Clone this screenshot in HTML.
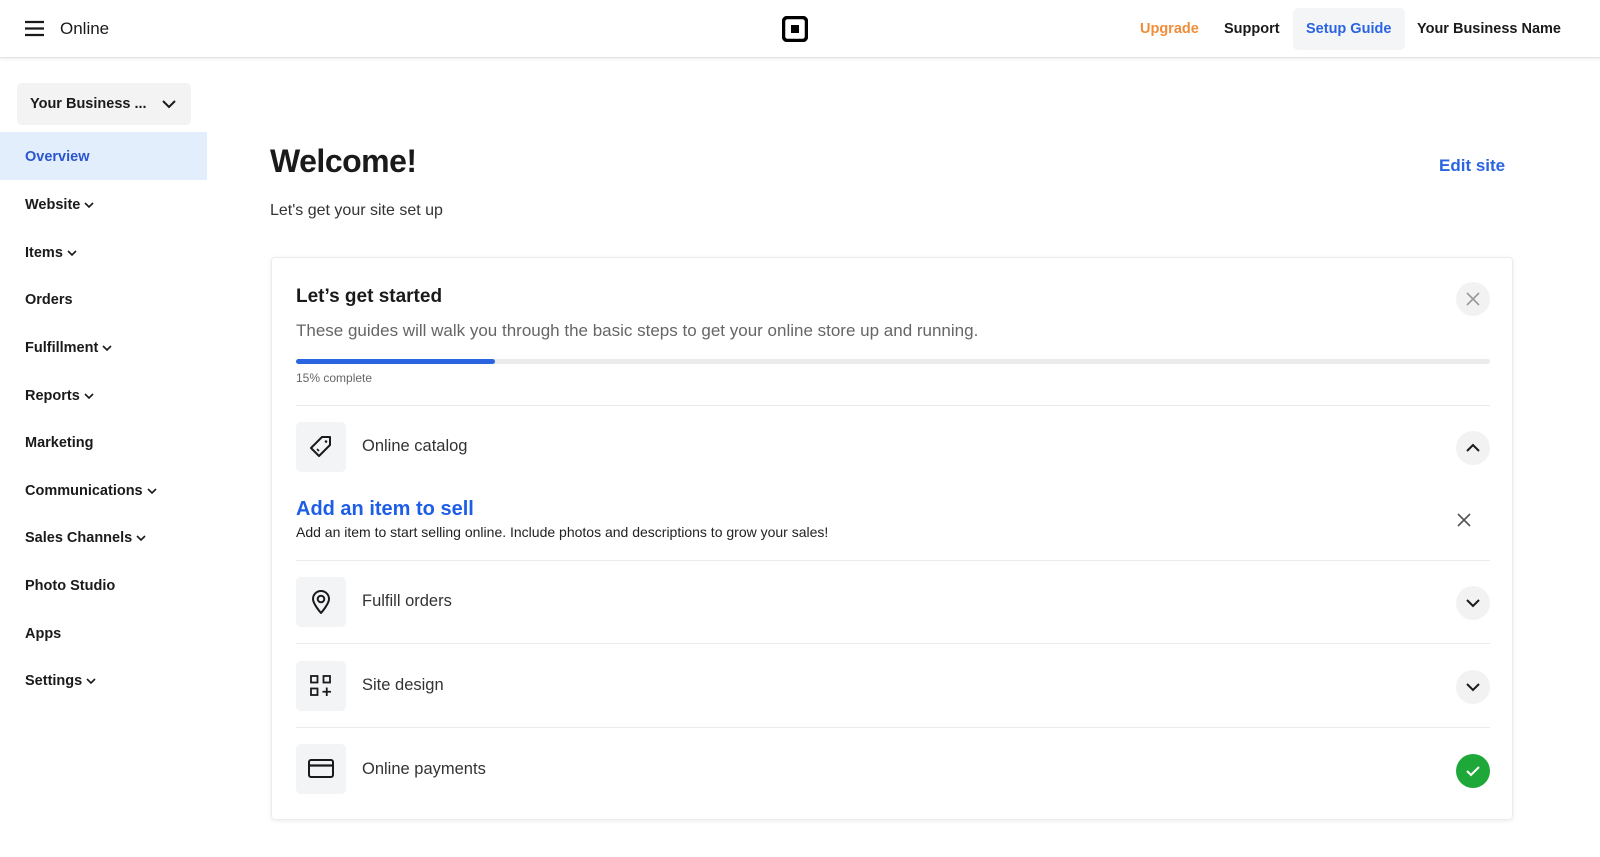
<!DOCTYPE html>
<html><head><meta charset="utf-8"><style>
*{box-sizing:border-box;margin:0;padding:0}
body{width:1600px;height:857px;overflow:hidden;background:#fff;font-family:"Liberation Sans",sans-serif;color:#1a1a1a;position:relative}
.top{position:absolute;left:0;top:0;width:1600px;height:58px;border-bottom:1px solid #e3e3e3;box-shadow:0 1px 3px rgba(0,0,0,.08)}
.abs{position:absolute}
.nav{position:absolute;left:25px;font-size:14.5px;font-weight:bold;color:#1a1a1a}
.nav svg{vertical-align:middle;margin-left:4px}
.card{position:absolute;left:271px;top:257px;width:1242px;height:563px;border:1px solid #ececec;border-radius:4px;box-shadow:0 1px 4px rgba(0,0,0,.08)}
.hr{position:absolute;left:24px;width:1194px;height:1px;background:#ebebeb}
.ib{position:absolute;left:24px;width:50px;height:50px;background:#f3f4f6;border-radius:5px;display:flex;align-items:center;justify-content:center}
.lbl{position:absolute;left:90px;font-size:16.5px;color:#333}
.cb{position:absolute;left:1184px;width:34px;height:34px;border-radius:50%;background:#f2f2f2;display:flex;align-items:center;justify-content:center}
</style></head><body>
<div class="top">
<svg class="abs" style="left:24px;top:20px" width="21" height="17"><path d="M1 2H20M1 8.5H20M1 15H20" stroke="#1a1a1a" stroke-width="2.2"/></svg>
<div class="abs" style="left:60px;top:19px;font-size:17px">Online</div>
<svg class="abs" style="left:782px;top:16px" width="26" height="26"><rect x="1.5" y="1.5" width="23" height="23" rx="4" fill="none" stroke="#000" stroke-width="3.5"/><rect x="9" y="9" width="8" height="8" fill="#000"/></svg>
<div class="abs" style="left:1140px;top:21px;font-size:14.5px;font-weight:bold;color:#f08d3b">Upgrade</div>
<div class="abs" style="left:1224px;top:21px;font-size:14.5px;font-weight:bold">Support</div>
<div class="abs" style="left:1293px;top:8px;width:112px;height:42px;background:#f3f5f7;border-radius:5px"></div>
<div class="abs" style="left:1306px;top:21px;font-size:14.5px;font-weight:bold;color:#2a64e0">Setup Guide</div>
<div class="abs" style="left:1417px;top:21px;font-size:14.5px;font-weight:bold">Your Business Name</div>
</div>
<div class="abs" style="left:17px;top:83px;width:174px;height:42px;background:#f3f3f3;border-radius:5px"></div>
<div class="abs" style="left:30px;top:96px;font-size:14.5px;font-weight:bold">Your Business ...</div>
<svg class="abs" style="left:161px;top:98px" width="16" height="12"><path d="M2 3L8 9L14 3" fill="none" stroke="#1a1a1a" stroke-width="2"/></svg>
<div class="abs" style="left:0;top:132px;width:207px;height:48px;background:#e3eefc"></div>
<div class="nav" style="top:149px;color:#2a55cf">Overview</div>
<div class="nav" style="top:197px">Website<svg width="10" height="8"><path d="M1 2L5 6L9 2" fill="none" stroke="#1a1a1a" stroke-width="1.6"/></svg></div>
<div class="nav" style="top:245px">Items<svg width="10" height="8"><path d="M1 2L5 6L9 2" fill="none" stroke="#1a1a1a" stroke-width="1.6"/></svg></div>
<div class="nav" style="top:292px">Orders</div>
<div class="nav" style="top:340px">Fulfillment<svg width="10" height="8"><path d="M1 2L5 6L9 2" fill="none" stroke="#1a1a1a" stroke-width="1.6"/></svg></div>
<div class="nav" style="top:388px">Reports<svg width="10" height="8"><path d="M1 2L5 6L9 2" fill="none" stroke="#1a1a1a" stroke-width="1.6"/></svg></div>
<div class="nav" style="top:435px">Marketing</div>
<div class="nav" style="top:483px">Communications<svg width="10" height="8"><path d="M1 2L5 6L9 2" fill="none" stroke="#1a1a1a" stroke-width="1.6"/></svg></div>
<div class="nav" style="top:530px">Sales Channels<svg width="10" height="8"><path d="M1 2L5 6L9 2" fill="none" stroke="#1a1a1a" stroke-width="1.6"/></svg></div>
<div class="nav" style="top:578px">Photo Studio</div>
<div class="nav" style="top:626px">Apps</div>
<div class="nav" style="top:673px">Settings<svg width="10" height="8"><path d="M1 2L5 6L9 2" fill="none" stroke="#1a1a1a" stroke-width="1.6"/></svg></div>

<div class="abs" style="left:270px;top:143px;font-size:32px;font-weight:bold;letter-spacing:-0.5px">Welcome!</div>
<div class="abs" style="left:1439px;top:156px;font-size:17px;font-weight:bold;color:#2a64e0">Edit site</div>
<div class="abs" style="left:270px;top:202px;font-size:16px;color:#333">Let's get your site set up</div>

<div class="card">
<div class="abs" style="left:24px;top:28px;font-size:19px;font-weight:bold">Let’s get started</div>
<div class="abs" style="left:24px;top:63px;font-size:17px;color:#666">These guides will walk you through the basic steps to get your online store up and running.</div>
<div class="cb" style="top:24px"><svg width="14" height="14"><path d="M1 1L13 13M13 1L1 13" stroke="#999" stroke-width="1.6"/></svg></div>
<div class="abs" style="left:24px;top:101px;width:1194px;height:5px;border-radius:3px;background:#ebebeb"></div>
<div class="abs" style="left:24px;top:101px;width:199px;height:5px;border-radius:3px;background:#2a64e0"></div>
<div class="abs" style="left:24px;top:113px;font-size:12px;color:#666">15% complete</div>
<div class="hr" style="top:147px"></div>

<div class="ib" style="top:164px"><svg width="26" height="26" viewBox="0 0 26 26"><path d="M14 3H22V11L11 22L3 14Z" fill="none" stroke="#1a1a1a" stroke-width="2" stroke-linejoin="round"/><circle cx="18" cy="7.5" r="1.3" fill="#1a1a1a"/><path d="M9 15L11 17" stroke="#1a1a1a" stroke-width="1.6"/></svg></div>
<div class="lbl" style="top:179px">Online catalog</div>
<div class="cb" style="top:173px"><svg width="14" height="10"><path d="M1 8L7 2L13 8" fill="none" stroke="#1a1a1a" stroke-width="2"/></svg></div>
<div class="abs" style="left:24px;top:240px;font-size:20px;font-weight:bold;color:#1e5ee6">Add an item to sell</div>
<div class="abs" style="left:24px;top:266px;font-size:14px;color:#222">Add an item to start selling online. Include photos and descriptions to grow your sales!</div>
<svg class="abs" style="left:1185px;top:255px" width="14" height="14"><path d="M1 1L13 13M13 1L1 13" stroke="#555" stroke-width="1.6"/></svg>
<div class="hr" style="top:302px"></div>

<div class="ib" style="top:319px"><svg width="24" height="26" viewBox="0 0 24 26"><path d="M12 24C12 24 4 15 4 10A8 8 0 0 1 20 10C20 15 12 24 12 24Z" fill="none" stroke="#1a1a1a" stroke-width="2" stroke-linejoin="round"/><circle cx="12" cy="10" r="3.3" fill="none" stroke="#1a1a1a" stroke-width="2"/></svg></div>
<div class="lbl" style="top:334px">Fulfill orders</div>
<div class="cb" style="top:328px"><svg width="14" height="10"><path d="M1 2L7 8L13 2" fill="none" stroke="#1a1a1a" stroke-width="2"/></svg></div>
<div class="hr" style="top:385px"></div>

<div class="ib" style="top:403px"><svg width="24" height="24"><rect x="2" y="2" width="6.5" height="6.5" fill="none" stroke="#1a1a1a" stroke-width="1.8"/><rect x="14.5" y="2" width="6.5" height="6.5" fill="none" stroke="#1a1a1a" stroke-width="1.8"/><rect x="2" y="14.5" width="6.5" height="6.5" fill="none" stroke="#1a1a1a" stroke-width="1.8"/><path d="M17.75 13.5V22M13.5 17.75H22" stroke="#1a1a1a" stroke-width="1.8"/></svg></div>
<div class="lbl" style="top:418px">Site design</div>
<div class="cb" style="top:412px"><svg width="14" height="10"><path d="M1 2L7 8L13 2" fill="none" stroke="#1a1a1a" stroke-width="2"/></svg></div>
<div class="hr" style="top:469px"></div>

<div class="ib" style="top:486px"><svg width="28" height="22"><rect x="2" y="2" width="24" height="17" rx="2" fill="none" stroke="#1a1a1a" stroke-width="2"/><path d="M2 7.5H26" stroke="#1a1a1a" stroke-width="2.2"/></svg></div>
<div class="lbl" style="top:502px">Online payments</div>
<div class="cb" style="top:496px;background:#1fa83a"><svg width="16" height="12"><path d="M2 6L6 10L14 2" fill="none" stroke="#fff" stroke-width="2"/></svg></div>
</div>
</body></html>
